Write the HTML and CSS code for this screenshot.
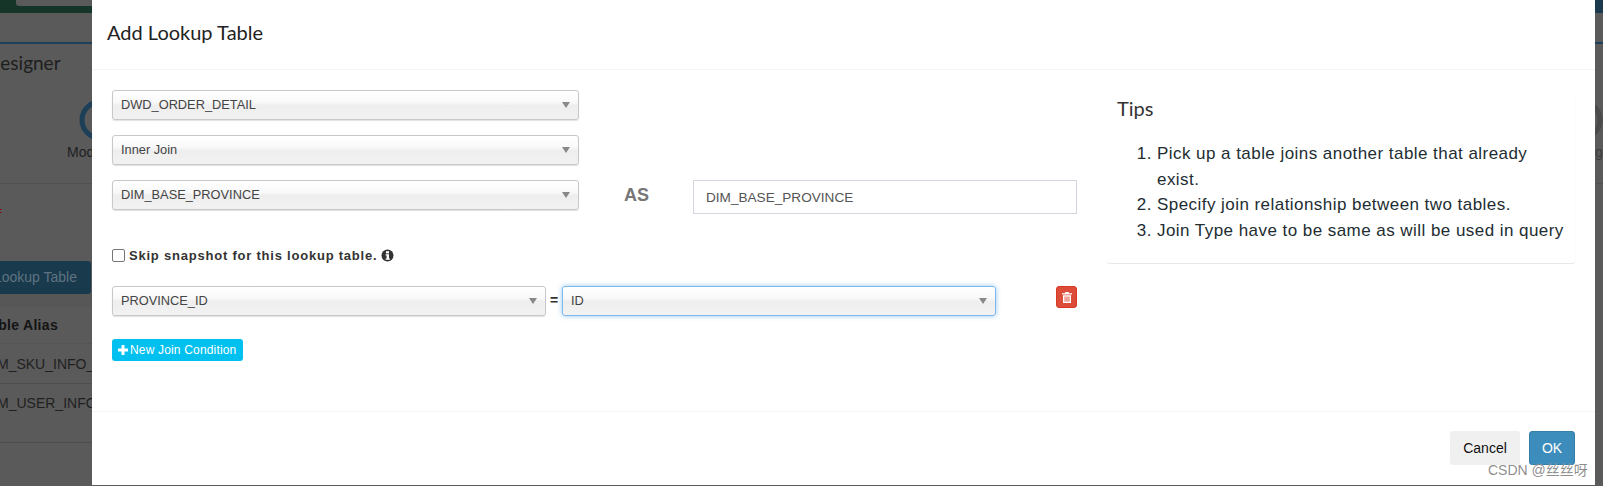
FILE: index.html
```html
<!DOCTYPE html>
<html lang="en">
<head>
<meta charset="utf-8">
<title>Add Lookup Table</title>
<link rel="stylesheet" href="styles.css">
</head>
<body>
<div class="page">
  <aside class="strip strip-left">
    <div class="topbar"><div class="topbar-box"></div></div>
    <div class="tabs"></div>
    <div class="page-title">Designer</div>
    <svg class="ring" width="92" height="60" viewBox="0 0 92 60"><circle cx="100" cy="36" r="18" fill="none" stroke="#1d3f57" stroke-width="5"/></svg>
    <div class="step-label"><span>Model</span></div>
    <div class="req">=</div>
    <div class="lookup-btn"><span>Add Lookup Table</span></div>
    <div class="th"><span>Table Alias</span></div>
    <div class="tr tr-a">DIM_SKU_INFO_TABLE</div>
    <div class="tr tr-b">DIM_USER_INFO_TABLE</div>
    <div class="tr-empty"></div>
  </aside>
  <div class="strip-gap"></div>
  <aside class="strip strip-right">
    <div class="topbar topbar-blue"></div>
    <div class="tabs"></div>
    <div class="page-title-empty"></div>
    <svg class="ring" width="8" height="60" viewBox="0 0 8 60"><circle cx="-13" cy="36" r="18" fill="none" stroke="#4b4b4b" stroke-width="5"/></svg>
    <div class="step-label step-label-right">g</div>
  </aside>
</div>

<div class="modal">
  <header class="modal-header"><h4 class="modal-title">Add Lookup Table</h4></header>
  <div class="modal-body">
    <div class="form-col">
      <div class="select select-wide"><span>DWD_ORDER_DETAIL</span><i class="arrow"></i></div>
      <div class="select select-wide"><span>Inner Join</span><i class="arrow"></i></div>
      <div class="alias-row">
        <div class="select select-wide"><span>DIM_BASE_PROVINCE</span><i class="arrow"></i></div>
        <b class="as">AS</b>
        <div class="text-input">DIM_BASE_PROVINCE</div>
      </div>
      <label class="skip">
        <span class="checkbox"></span>
        <span class="skip-text">Skip snapshot for this lookup table.</span>
        <svg class="info" width="13" height="13" viewBox="0 0 13 13"><circle cx="6.5" cy="6.5" r="6" fill="#333"/><rect x="5" y="2.2" width="3" height="2.2" fill="#fff"/><path d="M4.6 5.3H8v4.2h.9v1.3H4.6V9.5h1V6.6h-1z" fill="#fff"/></svg>
      </label>
      <div class="condition-row">
        <div class="select select-half"><span>PROVINCE_ID</span><i class="arrow"></i></div>
        <b class="equals">=</b>
        <div class="select select-half select-focus"><span>ID</span><i class="arrow"></i></div>
        <button class="btn-delete" type="button" aria-label="Delete">
          <svg width="10" height="11" viewBox="0 0 10 11"><path d="M3.4 0h3.2l.6 1.3H10v1.2H0V1.3h2.8zM1 3.2h8V11H1zM2.6 4.4v5.3h.9V4.4zm1.9 0v5.3h1V4.4zm2 0v5.3h.9V4.4z" fill="#fff" fill-rule="evenodd"/></svg>
        </button>
      </div>
      <button class="btn-new" type="button">
        <svg width="10" height="10" viewBox="0 0 10 10"><path d="M3.5 0h3v3.5H10v3H6.500V10h-3V6.500H0v-3h3.500z" fill="#fff"/></svg>
        <span>New Join Condition</span>
      </button>
    </div>
    <section class="tips">
      <h4 class="tips-title">Tips</h4>
      <ol class="tips-list">
        <li>Pick up a table joins another table that already exist.</li>
        <li>Specify join relationship between two tables.</li>
        <li>Join Type have to be same as will be used in query</li>
      </ol>
    </section>
  </div>
  <footer class="modal-footer">
    <button class="btn btn-cancel" type="button">Cancel</button>
    <button class="btn btn-ok" type="button">OK</button>
  </footer>
</div>
<div class="watermark">CSDN @丝丝呀</div>
</body>
</html>
```
FILE: styles.css
```css
* { box-sizing: border-box; }
html, body { margin: 0; padding: 0; width: 1603px; height: 486px; overflow: hidden; background: #5a5a5a; }
body { font-family: "Liberation Sans", Arial, sans-serif; color: #333; }

.page { display: flex; width: 1603px; height: 486px; }
.strip { overflow: hidden; flex: none; display: flex; flex-direction: column; }
.strip-left { width: 92px; }
.strip-right { width: 8px; }
.strip-gap { flex: 1; }

.topbar { height: 13px; background: #153528; padding-left: 16px; flex: none; }
.topbar-blue { background: #1c3a4d; padding: 0; }
.topbar-box { height: 6px; background: #5a5a5a; border-radius: 0 0 0 3px; }
.tabs { height: 31px; border-bottom: 2px solid #1d3f57; flex: none; }

.page-title { height: 40px; line-height: 38px; font-family: "Lato", sans-serif; font-size: 19px; color: #1e1e1e; margin-left: -14px; white-space: nowrap; flex: none; }
.page-title-empty { height: 40px; flex: none; }
.ring { display: block; flex: none; }
.step-label { height: 40px; flex: none; border-bottom: 1px solid #505050; display: flex; justify-content: flex-start; padding-left: 67px; line-height: 16px; font-size: 14px; color: #1f1f1f; white-space: nowrap; }
.step-label-right { padding-left: 0; color: #3c3c3c; }

.req { height: 77px; margin-left: -5px; padding-top: 20px; line-height: 14px; font-size: 12px; color: #8b0000; flex: none; }
.lookup-btn { width: 91px; height: 33px; flex: none; background: #183a4c; border-radius: 0 3px 3px 0; display: flex; justify-content: flex-end; padding-right: 14px; line-height: 33px; font-size: 14px; color: #5f7381; white-space: nowrap; }
.th { height: 50px; flex: none; padding: 10px 34px 0 0; display: flex; justify-content: flex-end; line-height: 16px; font-size: 14px; font-weight: bold; letter-spacing: .3px; color: #141414; white-space: nowrap; border-top: 13px solid #575757; border-bottom: 1px solid #545454; }
.tr { flex: none; white-space: nowrap; font-size: 14px; color: #1f1f1f; margin-left: -17px; padding-left: 0; border-bottom: 1px solid #4e4e4e; width: 109px; overflow: hidden; }
.tr-a { height: 40px; line-height: 40px; }
.tr-b { height: 59px; line-height: 38px; }
.tr-empty { flex: 1; }

.modal { position: absolute; left: 92px; top: 0; width: 1503px; height: 485px; background: #fff; display: flex; flex-direction: column; }
.modal-header { height: 70px; padding: 22px 15px 0; border-bottom: 1px solid #f4f4f4; flex: none; }
.modal-title { margin: 0; font-family: "Lato", sans-serif; font-weight: 400; font-size: 20px; line-height: 20px; color: #222; }
.modal-body { flex: 1; display: flex; padding: 20px 20px 0; }
.form-col { width: 965px; flex: none; display: flex; flex-direction: column; align-items: flex-start; }

.select { position: relative; height: 30px; line-height: 28px; padding-left: 8px; border: 1px solid #c8c8c8; border-radius: 3px; background: linear-gradient(to bottom, #fff 0%, #f9f9f9 40%, #eee 52%, #f2f2f2 100%); box-shadow: 0 1px 1px rgba(0,0,0,.12); font-size: 12.8px; color: #444; flex: none; }
.select-wide { width: 467px; margin-bottom: 15px; }
.select-half { width: 434px; }
.select-focus { border-color: #7db8ee; box-shadow: 0 0 5px rgba(102,175,233,.7); }
.arrow { position: absolute; right: 8px; top: 11px; width: 0; height: 0; border: 4px solid transparent; border-top: 6px solid #888; border-bottom: 0; }

.alias-row { display: flex; align-items: flex-start; width: 965px; height: 34px; }
.alias-row .select { margin: 0; }
.as { margin: 6px 0 0 45px; width: 27px; font-size: 18px; line-height: 18px; color: #777; }
.text-input { margin-left: auto; width: 384px; height: 34px; border: 1px solid #d2d6de; padding-left: 12px; line-height: 33px; font-size: 13.6px; color: #555; }

.skip { display: flex; align-items: center; margin-top: 34px; height: 14px; }
.checkbox { width: 13px; height: 13px; border: 1px solid #767676; border-radius: 2px; background: #fff; flex: none; }
.skip-text { margin-left: 4px; font-size: 13px; font-weight: bold; letter-spacing: .78px; color: #333; white-space: nowrap; }
.info { margin-left: 4px; flex: none; }

.condition-row { display: flex; align-items: flex-start; width: 965px; margin-top: 24px; }
.equals { width: 16px; text-align: center; font-size: 14px; line-height: 29px; color: #333; flex: none; }
.btn-delete { margin-left: auto; width: 21px; height: 22px; padding: 0; border: 1px solid #d73925; border-radius: 3px; background: #dd4b39; display: flex; align-items: center; justify-content: center; }

.btn-new { margin-top: 23px; width: 131px; height: 22px; padding: 0 0 0 6px; border: 0; border-radius: 3px; background: #00c0ef; color: #fff; display: flex; align-items: center; gap: 2px; font-family: inherit; font-size: 12px; letter-spacing: .17px; white-space: nowrap; }

.tips { width: 468px; margin: -1px 0 0 30px; padding: 9px 8px 20px 10px; align-self: flex-start; background: #fff; border-radius: 3px; box-shadow: 0 1px 1px rgba(0,0,0,.1); flex: none; }
.tips-title { margin: 0 0 23px; font-family: "Lato", sans-serif; font-weight: 400; font-size: 20px; line-height: 20px; color: #333; }
.tips-list { margin: 0; padding-left: 40px; font-size: 17px; letter-spacing: .45px; line-height: 25.6px; color: #222d32; }

.modal-footer { height: 74px; flex: none; border-top: 1px solid #f4f4f4; display: flex; justify-content: flex-end; gap: 9px; padding: 19px 20px 0 0; }
.btn { height: 34px; border-radius: 3px; border: 1px solid transparent; font-family: inherit; font-size: 14px; }
.btn-cancel { width: 70px; background: #f0f0f0; color: #111; }
.btn-ok { width: 46px; background: #3c8dbc; border-color: #367fa9; color: #fff; }

.watermark { position: absolute; left: 1488px; top: 462px; font-family: "Liberation Sans", "Noto Sans CJK SC", sans-serif; font-size: 14px; line-height: 17px; color: rgba(120,120,120,.85); text-shadow: 0 0 1px rgba(255,255,255,.6); white-space: nowrap; }
```
